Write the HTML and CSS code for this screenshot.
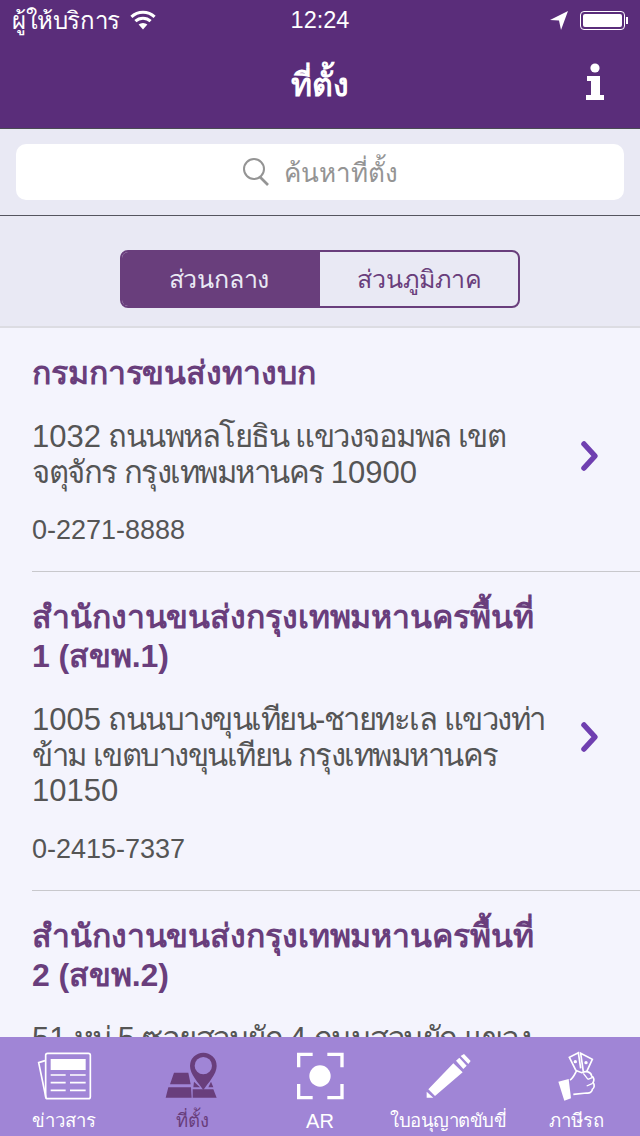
FILE: index.html
```html
<!DOCTYPE html>
<html lang="th">
<head>
  <meta charset="UTF-8">
  <meta name="viewport" content="width=device-width, initial-scale=1.0">
  <title>ที่ตั้ง</title>
  <link rel="stylesheet" href="styles.css">
</head>
<body>
  <div class="screen">
    <header class="topbar">
      <div class="status">
        <div class="status-left">
          <span class="carrier">ผู้ให้บริการ</span>
          <svg class="wifi" width="26" height="20" viewBox="0 0 26 20"><path d="M13 19.500 8.600 14.600a6.500 6.500 0 0 1 8.800 0Z" fill="#fff"/><path d="M5.400 11.200a11 11 0 0 1 15.200 0M1.400 6.800a16.800 16.800 0 0 1 23.200 0" fill="none" stroke="#fff" stroke-width="3"/></svg>
        </div>
        <div class="status-time">12:24</div>
        <div class="status-right">
          <svg width="20" height="20" viewBox="0 0 20 20"><path d="M19 1 1 10l9 .6L12 20Z" fill="#fff"/></svg>
          <div class="battery"><div class="battery-fill"></div></div>
          <div class="battery-tip"></div>
        </div>
      </div>
      <div class="nav">
        <h1 class="nav-title">ที่ตั้ง</h1>
        <svg class="nav-info" width="20" height="38" viewBox="0 0 20 38"><circle cx="10" cy="5" r="4.600" fill="#fff"/><path d="M2 13h13v19h4v5H1v-5h5V18H2Z" fill="#fff"/></svg>
      </div>
    </header>

    <div class="searchbar">
      <div class="searchbox">
        <svg width="28" height="30" viewBox="0 0 28 30"><circle cx="12" cy="12" r="10" fill="none" stroke="#949494" stroke-width="2"/><path d="m18 20 8 8" stroke="#949494" stroke-width="2.600"/></svg>
        <span>ค้นหาที่ตั้ง</span>
      </div>
    </div>

    <div class="segment-wrap">
      <div class="segment">
        <div class="segment-item active">ส่วนกลาง</div>
        <div class="segment-item">ส่วนภูมิภาค</div>
      </div>
    </div>

    <div class="list">
      <div class="row">
        <h2 class="row-title">กรมการขนส่งทางบก</h2>
        <p class="row-address"><span class="num">1032</span> ถนนพหลโยธิน แขวงจอมพล เขต<br>จตุจักร กรุงเทพมหานคร <span class="num">10900</span></p>
        <div class="row-phone">0-2271-8888</div>
        <svg class="chevron" width="20" height="32" viewBox="0 0 20 32"><path d="m4 4 11 12L4 28" fill="none" stroke="#6f3fb0" stroke-width="5.500" stroke-linecap="round" stroke-linejoin="round"/></svg>
      </div>
      <div class="row">
        <h2 class="row-title">สำนักงานขนส่งกรุงเทพมหานครพื้นที่<br>1 (สขพ.1)</h2>
        <p class="row-address"><span class="num">1005</span> ถนนบางขุนเทียน-ชายทะเล แขวงท่า<br>ข้าม เขตบางขุนเทียน กรุงเทพมหานคร<br><span class="num">10150</span></p>
        <div class="row-phone">0-2415-7337</div>
        <svg class="chevron" width="20" height="32" viewBox="0 0 20 32"><path d="m4 4 11 12L4 28" fill="none" stroke="#6f3fb0" stroke-width="5.500" stroke-linecap="round" stroke-linejoin="round"/></svg>
      </div>
      <div class="row">
        <h2 class="row-title">สำนักงานขนส่งกรุงเทพมหานครพื้นที่<br>2 (สขพ.2)</h2>
        <p class="row-address"><span class="num">51</span> หมู่ <span class="num">5</span> ซอยสวนผัก <span class="num">4</span> ถนนสวนผัก แขวง<br>ฉิมพลี เขตตลิ่งชัน กรุงเทพมหานคร</p>
      </div>
    </div>

    <nav class="tabbar">
      <div class="tab">
        <svg width="64" height="52" viewBox="96 60 192 156">
          <path d="M135 92 116 98l22 106" fill="none" stroke="#fff" stroke-width="5"/>
          <rect x="137" y="70" width="134" height="136" rx="6" fill="none" stroke="#fff" stroke-width="5"/>
          <rect x="152" y="87" width="105" height="33" fill="#fff"/>
          <path d="M152 135h45M210 135h47M152 158h45M210 158h47M152 181h45M210 181h47" stroke="#fff" stroke-width="5"/>
        </svg>
        <span>ข่าวสาร</span>
      </div>
      <div class="tab current">
        <svg width="64" height="52" viewBox="480 60 192 156">
          <path d="M522 128h43l7 35h-62ZM505 172h68l2 31h-78ZM578 178h62l10 25h-72ZM582 155l18 17h-20ZM633 155l7 17h-15Z" fill="#693e7c"/>
          <path d="M610 68a40 40 0 0 0-40 40c0 25 25 50 40 72 15-22 40-47 40-72a40 40 0 0 0-40-40Z" fill="#693e7c"/>
          <circle cx="610" cy="107" r="26" fill="#a085d6"/>
        </svg>
        <span>ที่ตั้ง</span>
      </div>
      <div class="tab">
        <svg width="64" height="52" viewBox="-96 60 192 156">
          <path d="M-22 73H-64V112M-64 162V203H-22M22 73H66V112M66 162V203H22" fill="none" stroke="#fff" stroke-width="10"/>
          <circle cx="0" cy="138" r="32" fill="#fff"/>
        </svg>
        <span class="latin">AR</span>
      </div>
      <div class="tab">
        <svg width="64" height="52" viewBox="288 60 192 156">
          <path d="M400 100l28 27-83 71-20-20ZM408 92l10-9 22 24-10 10ZM422 78l10-6 20 21-7 9ZM320 185l20 18h-20Z" fill="#fff"/>
        </svg>
        <span class="narrow">ใบอนุญาตขับขี่</span>
      </div>
      <div class="tab">
        <svg width="64" height="52" viewBox="672 60 192 156">
          <path d="M715 155l31-8 7 58-20 7Z" fill="#fff"/>
          <path d="M750 150c10-5 15-20 20-28l15 6c12-6 28-4 30 10 8 4 8 14 4 20 6 6 4 16-2 20 0 8-8 12-17 11l-40 4" fill="none" stroke="#fff" stroke-width="5"/>
          <path d="M790 130l14 18M804 148l14-6M800 168l18-8" fill="none" stroke="#fff" stroke-width="4"/>
          <path d="M768 122 748 82l27-14 7 47M790 125l-8-55 35 18-17 37" fill="none" stroke="#fff" stroke-width="5"/>
          <circle cx="766" cy="95" r="5" fill="#fff"/>
          <circle cx="798" cy="98" r="5" fill="#fff"/>
        </svg>
        <span>ภาษีรถ</span>
      </div>
    </nav>
  </div>
</body>
</html>
```

FILE: styles.css
```css
html, body {
  margin: 0;
  padding: 0;
}
body {
  font-family: "Liberation Sans", "Noto Sans", sans-serif;
  background-color: #f4f4fd;
}
.screen {
  position: relative;
  width: 640px;
  height: 1136px;
  overflow: hidden;
  background-color: #f4f4fd;
}
.topbar {
  height: 128px;
  background-color: #5a2d7a;
  border-bottom: 1px solid #4a4a55;
  color: #fff;
}
.status {
  display: flex;
  align-items: center;
  justify-content: space-between;
  height: 40px;
  padding: 0 12px;
}
.status-left {
  display: flex;
  align-items: center;
  gap: 10px;
  width: 220px;
}
.carrier {
  font-size: 24px;
  letter-spacing: -0.4px;
}
.status-right {
  display: flex;
  align-items: center;
  justify-content: flex-end;
  width: 220px;
}
.status-right svg {
  margin-right: 11px;
}
.battery {
  width: 45px;
  height: 19px;
  padding: 2px;
  border: 1px solid #fff;
  border-radius: 4px;
  box-sizing: border-box;
}
.battery-fill {
  height: 100%;
  background-color: #fff;
  border-radius: 2px;
}
.battery-tip {
  width: 2px;
  height: 7px;
  margin-left: 1px;
  background-color: #fff;
}
.status-time {
  font-size: 23.5px;
}
.nav {
  position: relative;
  display: flex;
  justify-content: center;
  align-items: center;
  height: 88px;
}
.nav-title {
  margin: 0;
  font-size: 32px;
  font-weight: bold;
}
.nav-info {
  position: absolute;
  right: 35px;
  top: 23px;
}
.searchbar {
  display: flex;
  padding: 15px 16px;
  height: 56px;
  background-color: #e9e9f4;
  border-bottom: 1px solid #55555f;
}
.searchbox {
  flex: 1;
  display: flex;
  justify-content: center;
  align-items: center;
  gap: 14px;
  background-color: #fff;
  border-radius: 10px;
  color: #949494;
  font-size: 26px;
}
.segment-wrap {
  display: flex;
  justify-content: center;
  padding: 34px 0 18px;
  background-color: #e9e9f4;
  border-bottom: 2px solid #dcdce2;
}
.segment {
  display: flex;
  width: 400px;
  height: 58px;
  box-sizing: border-box;
  border: 2px solid #693e7c;
  border-radius: 8px;
  overflow: hidden;
  color: #693e7c;
  font-size: 25px;
}
.segment-item {
  display: flex;
  justify-content: center;
  align-items: center;
  flex: 1;
}
.segment-item.active {
  flex: 0 0 198px;
  padding-right: 4px;
  box-sizing: border-box;
  letter-spacing: -0.2px;
  background-color: #693e7c;
  color: #e9e9f4;
}
.list {
  padding-left: 32px;
}
.row {
  position: relative;
  padding: 26px 0 25px;
  border-bottom: 1px solid #c8c8cc;
}
.row-title {
  margin: 0 0 26px;
  font-size: 32px;
  line-height: 39px;
  letter-spacing: -0.1px;
  color: #693e7c;
}
.row-address {
  margin: 0;
  font-size: 31px;
  line-height: 35.5px;
  letter-spacing: -1.5px;
  color: #555;
}
.row-address .num {
  letter-spacing: 0;
}
.row-phone {
  margin-top: 24px;
  font-size: 27px;
  line-height: 32px;
  color: #555;
}
.chevron {
  position: absolute;
  right: 40px;
  top: calc(50% - 10px);
}
.tabbar {
  position: absolute;
  left: 0;
  right: 0;
  bottom: 0;
  height: 99px;
  display: grid;
  grid-template-columns: repeat(5, 128px);
  background-color: #a085d6;
}
.tab {
  display: flex;
  flex-direction: column;
  align-items: center;
  padding-top: 13px;
  color: #fff;
  font-size: 18.5px;
  white-space: nowrap;
}
.tab span {
  line-height: 30px;
  margin-top: 4px;
}
.tab .latin {
  font-size: 20px;
}
.tab .narrow {
  letter-spacing: -0.5px;
}
.tab.current {
  color: #693e7c;
}
```
